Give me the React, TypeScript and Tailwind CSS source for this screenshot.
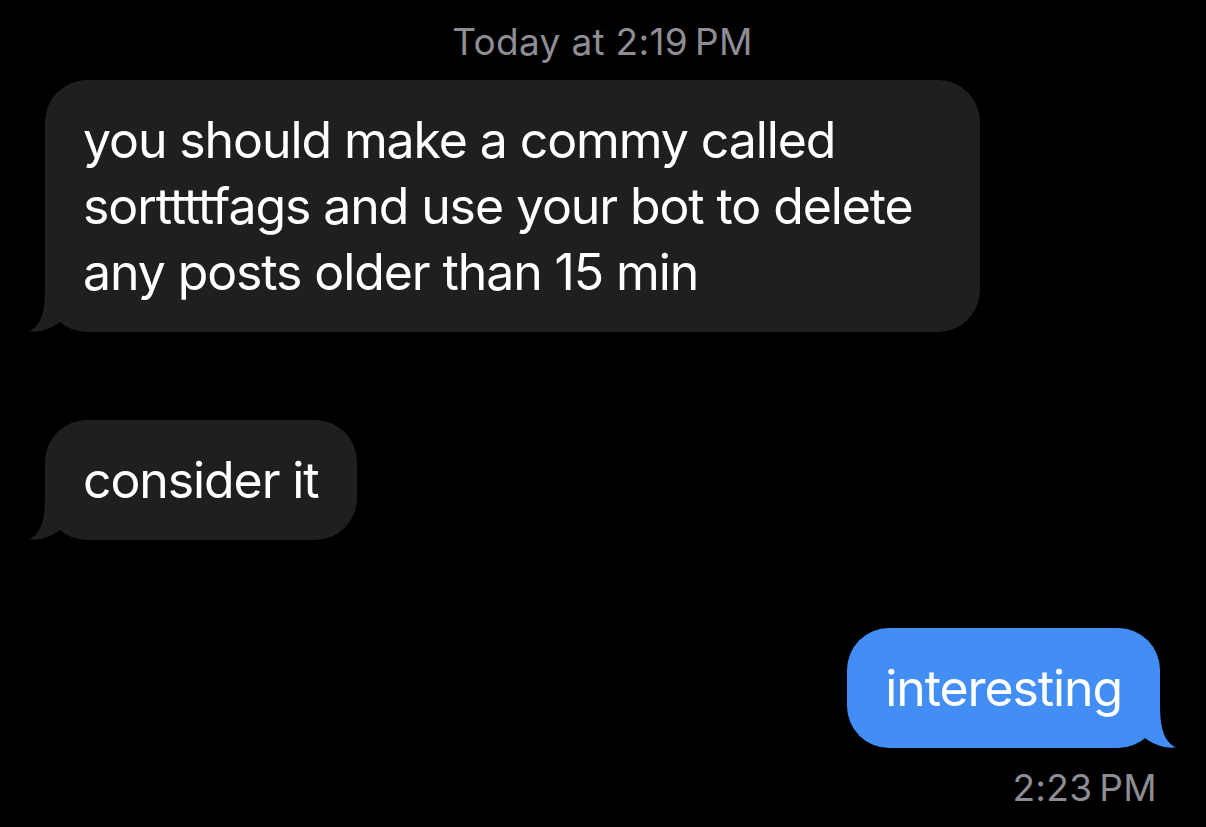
import React from 'react';

const Tail = ({ color, flip }: { color: string; flip?: boolean }) => (
    <svg
        viewBox="0 0 40 44"
        width={40}
        height={44}
        className={flip ? "absolute -right-[16px] bottom-0 -scale-x-100" : "absolute -left-[16px] bottom-0"}
    >
        <path d="M16 0 C16 22 13 37 0 43.5 C11 44.5 24 41 36 30 L36 0 Z" fill={color} />
    </svg>
);

const App = () => {
    return (
        <div
            className="w-full h-[827px] bg-black flex flex-col pl-[45px] pr-[46px] overflow-hidden"
            style={{ fontFamily: 'Inter, "Noto Sans", sans-serif' }}
        >
            {/* Date header */}
            <div className="pt-[22px] text-center text-[37px] leading-[40px] text-[#8d8d93] tracking-[0.3px]">
                Today at 2:19&#8201;PM
            </div>

            {/* Incoming */}
            <div className="mt-[18px] flex">
                <div className="relative w-[935px] bg-[#1f1f21] rounded-[42px] px-[38px] py-[27px] text-white text-[50px] leading-[66px] tracking-[-1.1px]">
                    you should make a commy called
                    <br />
                    sorttttfags and use your bot to delete
                    <br />
                    any posts older than 15 min
                    <Tail color="#1f1f21" />
                </div>
            </div>

            <div className="mt-[88px] flex">
                <div className="relative bg-[#1f1f21] rounded-[42px] px-[38px] py-[27px] text-white text-[50px] leading-[66px] tracking-[-1.1px]">
                    consider it
                    <Tail color="#1f1f21" />
                </div>
            </div>

            {/* Outgoing */}
            <div className="mt-[88px] flex justify-end">
                <div className="relative bg-[#438ef4] rounded-[42px] px-[38px] py-[27px] text-white text-[50px] leading-[66px] tracking-[-1.1px]">
                    interesting
                    <Tail color="#438ef4" flip />
                </div>
            </div>

            <div className="mt-[20px] text-right pr-[3px] text-[37px] leading-[40px] text-[#8d8d93] tracking-[0.3px]">
                2:23&#8201;PM
            </div>
        </div>
    );
};

export default App;
